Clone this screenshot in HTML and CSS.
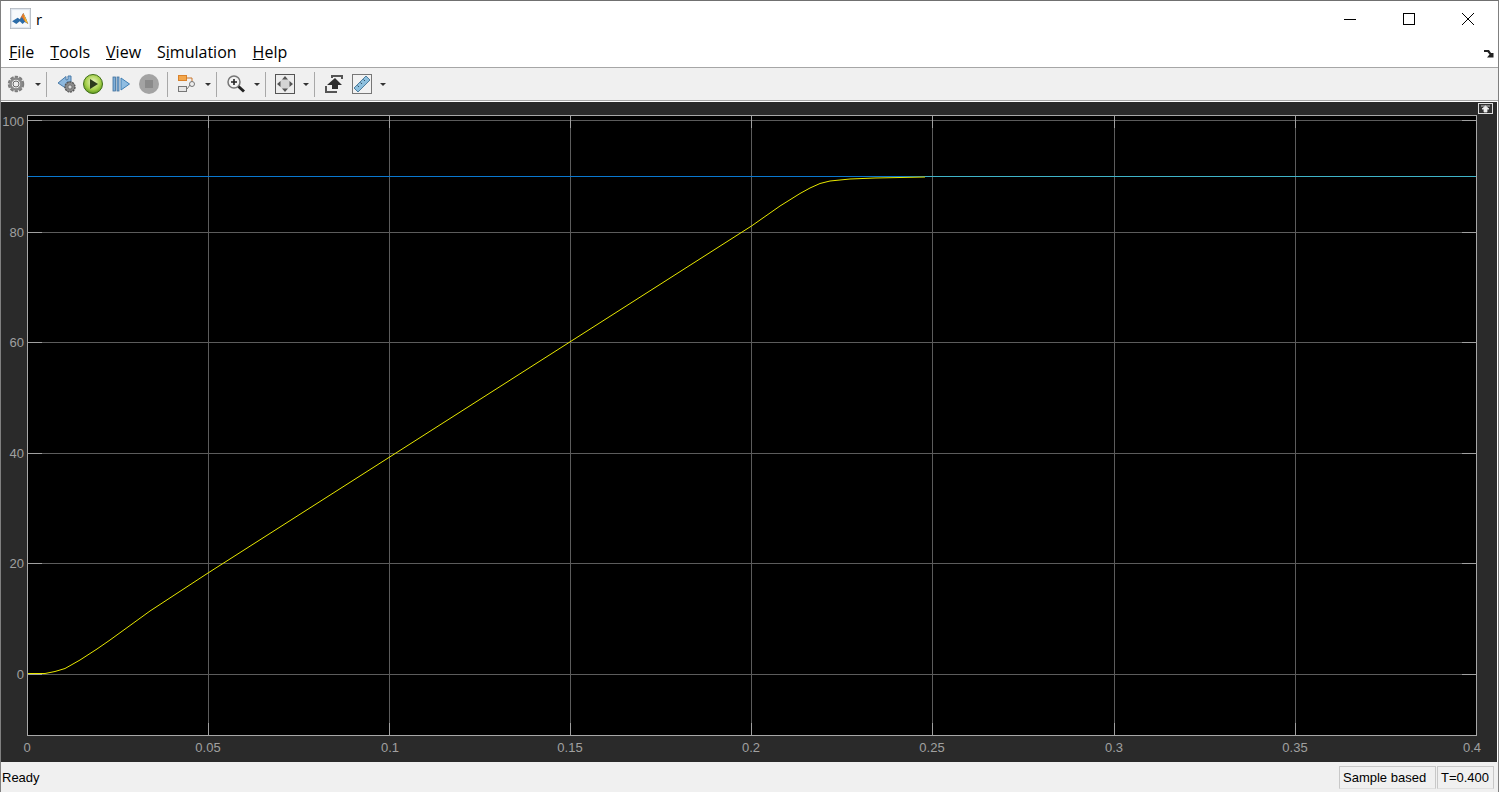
FILE: index.html
```html
<!DOCTYPE html>
<html lang="en">
<head>
    <meta charset="UTF-8">
    <title>r</title>
    <link rel="stylesheet" href="styles.css">
</head>
<body>
    <div id="window">
        <div class="titleBar">
            <svg class="appIcon" width="30" height="30" viewBox="0 0 30 30">
                <rect x="0.5" y="0.5" width="29" height="29" fill="#dfe6ee" stroke="#a8b0b8"/>
                <rect x="3" y="3" width="24" height="24" fill="#f7f9fb"/>
                <path d="M3 19 L11 14 L14 16 L19 7 L23 15 L26 23 L21 20 L18 23 L14 19 L9 23 Z" fill="#2b6ca8"/>
                <path d="M14 16 L19 7 L26 23 L21 19 L17 13 Z" fill="#e8792c"/>
                <path d="M19 7 L26 23 L22 19 Z" fill="#f5c22c"/>
            </svg>
            <span class="appTitle">r</span>
            <div class="winButtons">
                <svg width="14" height="14" viewBox="0 0 14 14"><path d="M1 7.5 H13" stroke="#000" fill="none"/></svg>
                <svg width="14" height="14" viewBox="0 0 14 14"><rect x="1.5" y="1.5" width="11" height="11" stroke="#000" fill="none"/></svg>
                <svg width="14" height="14" viewBox="0 0 14 14"><path d="M1 1 L13 13 M13 1 L1 13" stroke="#000" fill="none"/></svg>
            </div>
        </div>

        <div class="menuBar">
            <span><u>F</u>ile</span>
            <span><u>T</u>ools</span>
            <span><u>V</u>iew</span>
            <span>S<u>i</u>mulation</span>
            <span><u>H</u>elp</span>
            <svg class="dockArrow" width="10" height="9" viewBox="0 0 10 9">
                <path d="M0 1 H5 L7 4 H9.500 V8.500 H3 L5.500 5.500 L3.500 3 H0 Z" fill="#222"/>
            </svg>
        </div>

        <div class="toolBar">
            <!-- settings -->
            <svg class="tool gear" width="20" height="20" viewBox="0 0 20 20">
                <circle cx="10" cy="10" r="6.500" fill="none" stroke="#7d7d7d" stroke-width="3.500" stroke-dasharray="3 1.100"/>
                <circle cx="10" cy="10" r="5.500" fill="none" stroke="#8a8a8a" stroke-width="2.500"/>
                <circle cx="10" cy="10" r="3" fill="#ececec" stroke="#666"/>
            </svg>
            <span class="drop"></span>
            <span class="sep"></span>
            <!-- step back -->
            <svg class="tool back" width="20" height="20" viewBox="0 0 20 20">
                <path d="M1 9 L9 2.500 V6 L11 5.500 V2 H14 V8 H10 V15 Z" fill="#8db8de" stroke="#4a7ba8"/>
                <circle cx="13" cy="13" r="5" fill="#8a8a8a" stroke="#555" stroke-width="1.400" stroke-dasharray="2 0.800"/>
                <circle cx="13" cy="13" r="2" fill="#d8d8d8" stroke="#555" stroke-width="0.600"/>
            </svg>
            <!-- run -->
            <svg class="tool run" width="22" height="22" viewBox="0 0 22 22">
                <defs>
                    <radialGradient id="runFill" cx="50%" cy="40%" r="60%">
                        <stop offset="0" stop-color="#eef7c8"/>
                        <stop offset="0.650" stop-color="#a5cf4a"/>
                        <stop offset="1" stop-color="#5f9a1e"/>
                    </radialGradient>
                </defs>
                <circle cx="11" cy="11" r="9.500" fill="url(#runFill)" stroke="#3f6d18"/>
                <path d="M8 6 L16 11 L8 16 Z" fill="#2c3a1c"/>
            </svg>
            <!-- step forward -->
            <svg class="tool" width="20" height="20" viewBox="0 0 20 20">
                <rect x="2" y="3" width="2.500" height="14" fill="#7fb0da" stroke="#3f6f9c" stroke-width="0.800"/>
                <rect x="6" y="3" width="2" height="14" fill="#7fb0da" stroke="#3f6f9c" stroke-width="0.800"/>
                <path d="M10 4 L18.500 10 L10 16 Z" fill="#8fbde2" stroke="#3f7fb4"/>
            </svg>
            <!-- stop -->
            <svg class="tool" width="20" height="20" viewBox="0 0 20 20">
                <circle cx="10" cy="10" r="10" fill="#a3a3a3"/>
                <rect x="6" y="6" width="8" height="8" fill="#8a8a8a"/>
            </svg>
            <span class="sep"></span>
            <!-- signal hierarchy -->
            <svg class="tool" width="20" height="20" viewBox="0 0 20 20">
                <rect x="1.500" y="1.500" width="8" height="5" fill="#f3a64a" stroke="#d9822b"/>
                <path d="M9.500 4 H15 V8" fill="none" stroke="#c9752a"/>
                <circle cx="15" cy="10" r="2.500" fill="#eee" stroke="#777"/>
                <path d="M13 11 L10 15" fill="none" stroke="#777"/>
                <rect x="1.500" y="12.500" width="8" height="5" fill="#e6e6e6" stroke="#777"/>
            </svg>
            <span class="drop"></span>
            <span class="sep"></span>
            <!-- zoom -->
            <svg class="tool" width="20" height="20" viewBox="0 0 20 20">
                <circle cx="8" cy="8" r="6" fill="#f2f2f2" stroke="#777" stroke-width="1.500"/>
                <path d="M5 8 H11 M8 5 V11" stroke="#222" stroke-width="1.600" fill="none"/>
                <path d="M12.500 12.500 L18 17.500" stroke="#222" stroke-width="3" fill="none"/>
            </svg>
            <span class="drop"></span>
            <span class="sep"></span>
            <!-- fit to view -->
            <svg class="tool" width="20" height="20" viewBox="0 0 20 20">
                <rect x="0.500" y="0.500" width="19" height="19" fill="#ededed" stroke="#555"/>
                <circle cx="10" cy="10" r="5.500" fill="#d4d4d4"/>
                <path d="M10 2 L13 5.500 H7 Z M10 18 L13 14.500 H7 Z M2 10 L5.500 7 V13 Z M18 10 L14.500 7 V13 Z" fill="#555"/>
            </svg>
            <span class="drop"></span>
            <span class="sep"></span>
            <!-- up to parent -->
            <svg class="tool" width="20" height="20" viewBox="0 0 20 20">
                <path d="M8 4 V2 H18 V5 M7 18 H2 V12 M7 18 H13" stroke="#555" stroke-width="2" fill="none"/>
                <path d="M11 4 L18 11 H14 V15 H8 V11 H3 Z" fill="#2e2e2e"/>
            </svg>
            <!-- ruler -->
            <svg class="tool" width="20" height="20" viewBox="0 0 20 20">
                <rect x="0.500" y="0.500" width="19" height="19" fill="#f2f2f2" stroke="#777"/>
                <path d="M2 14 L14 2 L18 6 L6 18 Z" fill="#8ec0de" stroke="#4f7f9f"/>
                <path d="M7 13 L5.500 11.500 M10 10 L8.500 8.500 M13 7 L11.500 5.500" stroke="#33566e" fill="none"/>
            </svg>
            <span class="drop"></span>
        </div>

        <div class="plotPanel">
            <svg class="plot" width="1496" height="660" viewBox="1 102 1496 660">
                <rect x="1" y="102" width="1496" height="660" fill="#2a2a2a"/>
                <rect x="27.500" y="115.500" width="1449" height="620" fill="#000"/>

                <g class="grid">
                    <path d="M208.500 116 V735 M389.500 116 V735 M570.500 116 V735 M751.500 116 V735 M932.500 116 V735 M1114.500 116 V735 M1295.500 116 V735"/>
                    <path d="M28 120.500 H1476 M28 232.500 H1476 M28 342.500 H1476 M28 453.500 H1476 M28 563.500 H1476 M28 674.500 H1476"/>
                </g>
                <g class="axisTicks">
                    <path d="M28 120.500 H42 M28 232.500 H42 M28 342.500 H42 M28 453.500 H42 M28 563.500 H42 M28 674.500 H42"/>
                    <path d="M1462 120.500 H1476 M1462 232.500 H1476 M1462 342.500 H1476 M1462 453.500 H1476 M1462 563.500 H1476 M1462 674.500 H1476"/>
                    <path d="M208.500 116 V128 M389.500 116 V128 M570.500 116 V128 M751.500 116 V128 M932.500 116 V128 M1114.500 116 V128 M1295.500 116 V128"/>
                    <path d="M208.500 723 V735 M389.500 723 V735 M570.500 723 V735 M751.500 723 V735 M932.500 723 V735 M1114.500 723 V735 M1295.500 723 V735"/>
                </g>
                <rect class="axisBox" x="27.500" y="115.500" width="1449" height="620"/>

                <g class="ticksY">
                    <text x="24" y="126">100</text>
                    <text x="24" y="237">80</text>
                    <text x="24" y="347">60</text>
                    <text x="24" y="458">40</text>
                    <text x="24" y="568">20</text>
                    <text x="24" y="679">0</text>
                </g>
                <g class="ticksX">
                    <text x="27" y="752">0</text>
                    <text x="208" y="752">0.05</text>
                    <text x="390" y="752">0.1</text>
                    <text x="570" y="752">0.15</text>
                    <text x="751" y="752">0.2</text>
                    <text x="932" y="752">0.25</text>
                    <text x="1114" y="752">0.3</text>
                    <text x="1295" y="752">0.35</text>
                    <text x="1472" y="752">0.4</text>
                </g>

                <path class="ref" d="M28 176.500 H925"/>
                <path class="refEnd" d="M925 176.500 H1476"/>
                <path class="resp" d="M28 673.500 H45 L55 671.500 L65 668.500 L80 660 L97 649 L110 640 L150 611 L208 573 L751.500 226 L780 206 L800 193.500 L810 188 L820 183.500 L830 181 L850 179 L875 178 L925 177"/>
            </svg>
            <svg class="restore" width="15" height="11" viewBox="0 0 15 11">
                <rect x="0.500" y="0.500" width="14" height="10" fill="#333" stroke="#ddd"/>
                <path d="M3 3 H12 M7.500 3 L11 6 H9 V9 H6 V6 H4 Z" stroke="#eee" stroke-width="0.800" fill="#eee"/>
            </svg>
        </div>

        <div class="statusBar">
            <span class="ready">Ready</span>
            <span class="statusCell sample">Sample based</span>
            <span class="statusCell time">T=0.400</span>
        </div>
    </div>
</body>
</html>
```

FILE: styles.css
```css
* {
    margin: 0;
    padding: 0;
    box-sizing: border-box;
}

html, body {
    height: 100%;
    overflow: hidden;
}

body {
    font-family: "Open Sans", "Noto Sans", sans-serif;
    background-color: #fff;
    color: #000;
}

#window {
    height: 792px;
    display: flex;
    flex-direction: column;
    border-top: 1px solid #707070;
    border-left: 1px solid #808080;
    border-right: 1px solid #808080;
}

/* Title bar */
.titleBar {
    height: 39px;
    flex: none;
    display: flex;
    align-items: center;
    padding-left: 9px;
    padding-bottom: 4px;
    background-color: #fff;
}

.appIcon {
    width: 21px;
    height: 21px;
}

.appTitle {
    margin-left: 5px;
    font-family: "Open Sans", sans-serif;
    font-size: 15px;
}

.winButtons {
    margin-left: auto;
    margin-right: 23px;
    display: flex;
    gap: 45px;
    align-items: center;
}

/* Menu bar */
.menuBar {
    height: 28px;
    flex: none;
    display: flex;
    align-items: center;
    gap: 16px;
    padding-left: 8px;
    padding-bottom: 3px;
    font-size: 16px;
    background-color: #fff;
    border-bottom: 1px solid #a6a6a6;
}

.dockArrow {
    margin-left: auto;
    margin-right: 4px;
    margin-top: 3px;
}

/* Toolbar */
.toolBar {
    height: 33px;
    flex: none;
    display: flex;
    align-items: center;
    padding-left: 5px;
    background-color: #f0f0f0;
    border-bottom: 1px solid #a6a6a6;
}

.tool {
    flex: none;
    margin-right: 8px;
}

.tool.gear {
    margin-right: 9px;
}

.tool.back {
    margin-left: 1px;
    margin-right: 5px;
}

.tool.run {
    margin-right: 7px;
}

.drop {
    width: 0;
    height: 0;
    margin-right: 5px;
    border-left: 3.500px solid transparent;
    border-right: 3.500px solid transparent;
    border-top: 3px solid #333;
}

.sep {
    width: 1px;
    height: 25px;
    margin-right: 9px;
    background-color: #a8a8a8;
}

/* Scope axes */
.plotPanel {
    margin-top: 1px;
    height: 660px;
    flex: none;
    position: relative;
}

.plot {
    display: block;
}

.grid path {
    fill: none;
    stroke: #5c5c5c;
    stroke-width: 1;
}

.axisTicks path {
    fill: none;
    stroke: #a0a0a0;
    stroke-width: 1;
}

.axisBox {
    fill: none;
    stroke: #a8a8a8;
}

.ticksY text,
.ticksX text {
    font-family: "Liberation Sans", Arial, sans-serif;
    font-size: 13px;
    fill: #a0a0a0;
}

.ticksY text {
    text-anchor: end;
}

.ticksX text {
    text-anchor: middle;
}

.ref,
.refEnd,
.resp {
    fill: none;
    stroke-width: 1;
}

.ref {
    stroke: #0a78d0;
}

.refEnd {
    stroke: #3fb3c8;
}

.resp {
    stroke: #e8e800;
}

/* sits on the corner of the scope */
.restore {
    position: absolute;
    top: 1px;
    right: 5px;
}

/* Status bar */
.statusBar {
    flex: 1;
    display: flex;
    align-items: center;
    font-family: "Liberation Sans", Arial, sans-serif;
    font-size: 13px;
    background-color: #f0f0f0;
}

.ready {
    margin-left: 1px;
    margin-right: auto;
}

.statusCell {
    height: 23px;
    line-height: 21px;
    border: 1px solid #c8c8c8;
    border-bottom-color: #e0e0e0;
}

.sample {
    width: 97px;
    padding-left: 3px;
    margin-right: 1px;
}

.time {
    width: 57px;
    padding-left: 3px;
    margin-right: 4px;
}
```
